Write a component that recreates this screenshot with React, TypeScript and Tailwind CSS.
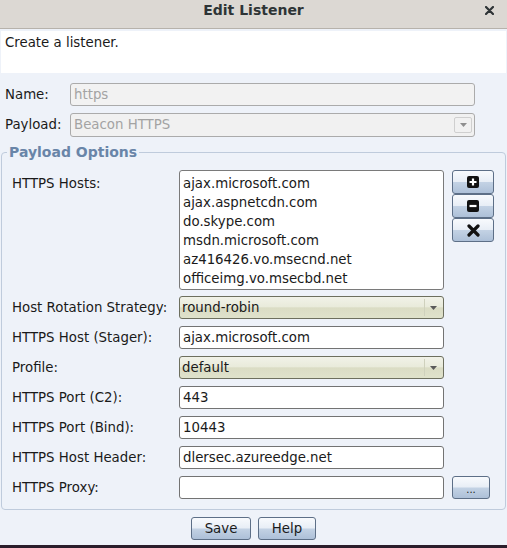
import React from "react";

const btnBg =
  "bg-[linear-gradient(to_bottom,#f8fafd_0%,#e8eef6_48%,#c3d2e4_52%,#adc0d8_100%)] border border-[#5d6f87] rounded-[3px]";
const comboBg =
  "bg-[linear-gradient(to_bottom,#f1f2e8_0%,#e9ebdb_46%,#dadcc4_52%,#dfe2cb_100%)] border border-[#6d6f5e] rounded-[3px]";

function Arrow({ color = "#555" }: { color?: string }) {
  return (
    <svg width="7" height="4" viewBox="0 0 7 4">
      <polygon points="0,0 7,0 3.5,4" fill={color} />
    </svg>
  );
}

function Combo({ value }: { value: string }) {
  return (
    <div className={`h-[23px] w-[265px] flex items-center ${comboBg}`}>
      <div className="flex-1 pl-[2px] leading-none">{value}</div>
      <div className="w-[18px] h-[17px] mr-[1px] border-l border-[#cfd1bd] flex items-center justify-center">
        <Arrow color="#5a5a5a" />
      </div>
    </div>
  );
}

function Input({ value }: { value: string }) {
  return (
    <div className="h-[23px] w-[265px] bg-white border border-[#737373] rounded-[3px] flex items-center pl-[3px] leading-none">
      {value}
    </div>
  );
}

function Row({ label, children, first }: { label: string; children: React.ReactNode; first?: boolean }) {
  return (
    <div className={`flex items-center ${first ? "mt-[6px]" : "mt-[7px]"}`}>
      <div className="w-[167px]">{label}</div>
      {children}
    </div>
  );
}

export default function App() {
  const hosts = [
    "ajax.microsoft.com",
    "ajax.aspnetcdn.com",
    "do.skype.com",
    "msdn.microsoft.com",
    "az416426.vo.msecnd.net",
    "officeimg.vo.msecbd.net",
  ];
  return (
    <div className="w-[507px] h-[548px] bg-[#eef2f9] flex flex-col font-['DejaVu_Sans',sans-serif] text-[13.33px] text-[#1a1a1a] overflow-hidden">
      {/* title bar */}
      <div className="h-[29px] shrink-0 bg-[#dcd8d3] border-b border-[#b7b2ab] grid grid-cols-[1fr_auto_1fr] items-start">
        <div />
        <div className="pt-[2px] font-bold text-[14px] leading-[17px] text-[#2e3436]">Edit Listener</div>
        <div className="flex justify-end pr-[13px] pt-[6px]">
          <svg width="9" height="9" viewBox="0 0 9 9">
            <path d="M1 1 L8 8 M8 1 L1 8" stroke="#2e3436" strokeWidth="2.2" strokeLinecap="round" />
          </svg>
        </div>
      </div>

      {/* description */}
      <div className="mx-[1px] mt-[2px] h-[42px] bg-white pl-[4px] pt-[4px] leading-[15px]">Create a listener.</div>

      {/* name */}
      <div className="flex items-center mt-[10px]">
        <div className="w-[70px] pl-[5px]">Name:</div>
        <div className="w-[405px] h-[23px] bg-[#f2f2f2] border border-[#ababab] rounded-[3px] flex items-center pl-[3px] text-[#a3a3a3] leading-none">
          https
        </div>
      </div>

      {/* payload */}
      <div className="flex items-center mt-[7px]">
        <div className="w-[70px] pl-[5px]">Payload:</div>
        <div className="w-[405px] h-[24px] bg-[#f1f1f1] border border-[#ababab] rounded-[3px] flex items-center pl-[3px] text-[#a3a3a3] leading-none">
          <div className="flex-1">Beacon HTTPS</div>
          <div className="w-[18px] h-[16px] mr-[2px] border border-[#cfcfcf] rounded-[2px] flex items-center justify-center">
            <Arrow color="#8f8f8f" />
          </div>
        </div>
      </div>

      {/* payload options */}
      <fieldset className="ml-[1px] w-[505px] mt-[7px] border border-[#bfcbdc] rounded-[4px] pl-[10px] pt-[9px] pb-[10px]">
        <legend className="-ml-[5px] px-[2px] font-bold text-[14px] leading-[17px] text-[#6985a8]">Payload Options</legend>

        <div className="flex items-start">
          <div className="w-[167px] pt-[4px]">HTTPS Hosts:</div>
          <div className="w-[265px] h-[120px] bg-white border border-[#7a7a7a] rounded-[3px] pl-[3px] pt-[3px] leading-[19px]">
            {hosts.map((h) => (
              <div key={h}>{h}</div>
            ))}
          </div>
          <div className="ml-[8px] flex flex-col">
            <div className={`w-[42px] h-[24px] flex items-center justify-center ${btnBg}`}>
              <svg width="12" height="12" viewBox="0 0 12 12">
                <rect x="0" y="0" width="12" height="12" rx="2" fill="#111" />
                <path d="M6 2.5 V9.5 M2.5 6 H9.5" stroke="#fff" strokeWidth="2.2" />
              </svg>
            </div>
            <div className={`w-[42px] h-[24px] flex items-center justify-center ${btnBg}`}>
              <svg width="12" height="12" viewBox="0 0 12 12">
                <rect x="0" y="0" width="12" height="12" rx="2" fill="#111" />
                <path d="M2.5 6 H9.5" stroke="#fff" strokeWidth="2.2" />
              </svg>
            </div>
            <div className={`w-[42px] h-[24px] flex items-center justify-center ${btnBg}`}>
              <svg width="13" height="13" viewBox="0 0 13 13">
                <path d="M2 2 L11 11 M11 2 L2 11" stroke="#111" strokeWidth="3.2" strokeLinecap="round" />
              </svg>
            </div>
          </div>
        </div>

        <Row label="Host Rotation Strategy:" first>
          <Combo value="round-robin" />
        </Row>
        <Row label="HTTPS Host (Stager):">
          <Input value="ajax.microsoft.com" />
        </Row>
        <Row label="Profile:">
          <Combo value="default" />
        </Row>
        <Row label="HTTPS Port (C2):">
          <Input value="443" />
        </Row>
        <Row label="HTTPS Port (Bind):">
          <Input value="10443" />
        </Row>
        <Row label="HTTPS Host Header:">
          <Input value="dlersec.azureedge.net" />
        </Row>
        <Row label="HTTPS Proxy:">
          <Input value="" />
          <div className={`ml-[8px] w-[38px] h-[23px] flex items-end justify-center pb-[3px] text-[10px] leading-none ${btnBg}`}>
            ...
          </div>
        </Row>
      </fieldset>

      {/* footer buttons */}
      <div className="flex justify-center gap-[7px] mt-[7px]">
        <div className={`w-[60px] h-[23px] flex items-center justify-center leading-none ${btnBg}`}>Save</div>
        <div className={`w-[58px] h-[23px] flex items-center justify-center leading-none ${btnBg}`}>Help</div>
      </div>

      <div className="flex-1" />
      <div className="h-[3px] shrink-0 bg-[#2a1d2b]" />
    </div>
  );
}
